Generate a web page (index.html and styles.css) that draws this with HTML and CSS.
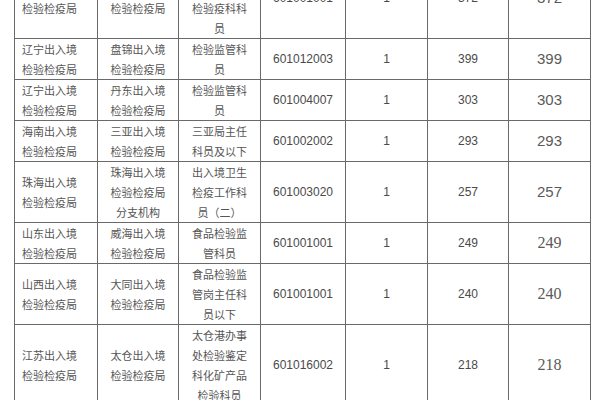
FILE: index.html
```html
<!DOCTYPE html>
<html lang="zh">
<head>
<meta charset="utf-8">
<title>招录表</title>
<link rel="stylesheet" href="styles.css">
</head>
<body>
<table class="grid">
  <colgroup>
    <col class="c1"><col class="c2"><col class="c3"><col class="c4"><col class="c5"><col class="c6"><col class="c7">
  </colgroup>
  <tbody>
    <tr>
      <td class="org">辽宁出入境<br>检验检疫局</td>
      <td class="cn">大连出入境<br>检验检疫局</td>
      <td class="cn">大连港办事<br>处卫生检验<br>检验疫科科<br>员</td>
      <td class="num">601001001</td>
      <td class="num">1</td>
      <td class="num">372</td>
      <td class="big">372</td>
    </tr>
    <tr>
      <td class="org">辽宁出入境<br>检验检疫局</td>
      <td class="cn">盘锦出入境<br>检验检疫局</td>
      <td class="cn">检验监管科<br>员</td>
      <td class="num">601012003</td>
      <td class="num">1</td>
      <td class="num">399</td>
      <td class="big">399</td>
    </tr>
    <tr>
      <td class="org">辽宁出入境<br>检验检疫局</td>
      <td class="cn">丹东出入境<br>检验检疫局</td>
      <td class="cn">检验监管科<br>员</td>
      <td class="num">601004007</td>
      <td class="num">1</td>
      <td class="num">303</td>
      <td class="big">303</td>
    </tr>
    <tr>
      <td class="org">海南出入境<br>检验检疫局</td>
      <td class="cn">三亚出入境<br>检验检疫局</td>
      <td class="cn">三亚局主任<br>科员及以下</td>
      <td class="num">601002002</td>
      <td class="num">1</td>
      <td class="num">293</td>
      <td class="big">293</td>
    </tr>
    <tr>
      <td class="org">珠海出入境<br>检验检疫局</td>
      <td class="cn">珠海出入境<br>检验检疫局<br>分支机构</td>
      <td class="cn">出入境卫生<br>检疫工作科<br>员（二）</td>
      <td class="num">601003020</td>
      <td class="num">1</td>
      <td class="num">257</td>
      <td class="big">257</td>
    </tr>
    <tr>
      <td class="org">山东出入境<br>检验检疫局</td>
      <td class="cn">威海出入境<br>检验检疫局</td>
      <td class="cn">食品检验监<br>管科员</td>
      <td class="num">601001001</td>
      <td class="num">1</td>
      <td class="num">249</td>
      <td class="big serif">249</td>
    </tr>
    <tr>
      <td class="org">山西出入境<br>检验检疫局</td>
      <td class="cn">大同出入境<br>检验检疫局</td>
      <td class="cn">食品检验监<br>管岗主任科<br>员以下</td>
      <td class="num">601001001</td>
      <td class="num">1</td>
      <td class="num">240</td>
      <td class="big serif">240</td>
    </tr>
    <tr>
      <td class="org">江苏出入境<br>检验检疫局</td>
      <td class="cn">太仓出入境<br>检验检疫局</td>
      <td class="cn">太仓港办事<br>处检验鉴定<br>科化矿产品<br>检验科员</td>
      <td class="num">601016002</td>
      <td class="num">1</td>
      <td class="num">218</td>
      <td class="big serif">218</td>
    </tr>
  </tbody>
</table>
</body>
</html>
```

FILE: styles.css
```css
html, body {
  margin: 0;
  padding: 0;
  background: #ffffff;
}

body {
  overflow: hidden;
  width: 600px;
  height: 400px;
}

.grid {
  border-collapse: collapse;
  table-layout: fixed;
  width: 577px;
  margin: -43px 0 0 14px;
  font-family: "Noto Sans CJK SC", "Liberation Sans", sans-serif;
  color: #555555;
}

.c1 { width: 83px; }
.c2 { width: 81px; }
.c3 { width: 82px; }
.c4 { width: 85px; }
.c5 { width: 82px; }
.c6 { width: 81px; }
.c7 { width: 82px; }

.grid td {
  border: 1px solid #6a6a6a;
  padding: 0;
  line-height: 20px;
  vertical-align: middle;
  text-align: center;
  white-space: nowrap;
  overflow: hidden;
}

.grid td.org {
  text-align: left;
  padding-left: 7px;
  font-size: 11px;
}

.grid td.cn {
  font-size: 11px;
}

.grid td.num {
  font-family: "Liberation Sans", Arial, sans-serif;
  font-size: 12px;
  color: #4a4a4a;
}

.grid td.big {
  font-family: "Liberation Sans", Arial, sans-serif;
  font-size: 15px;
  color: #5a5a5a;
}

.grid td.big.serif {
  font-family: "Liberation Serif", "Times New Roman", serif;
  font-size: 16px;
}
```
